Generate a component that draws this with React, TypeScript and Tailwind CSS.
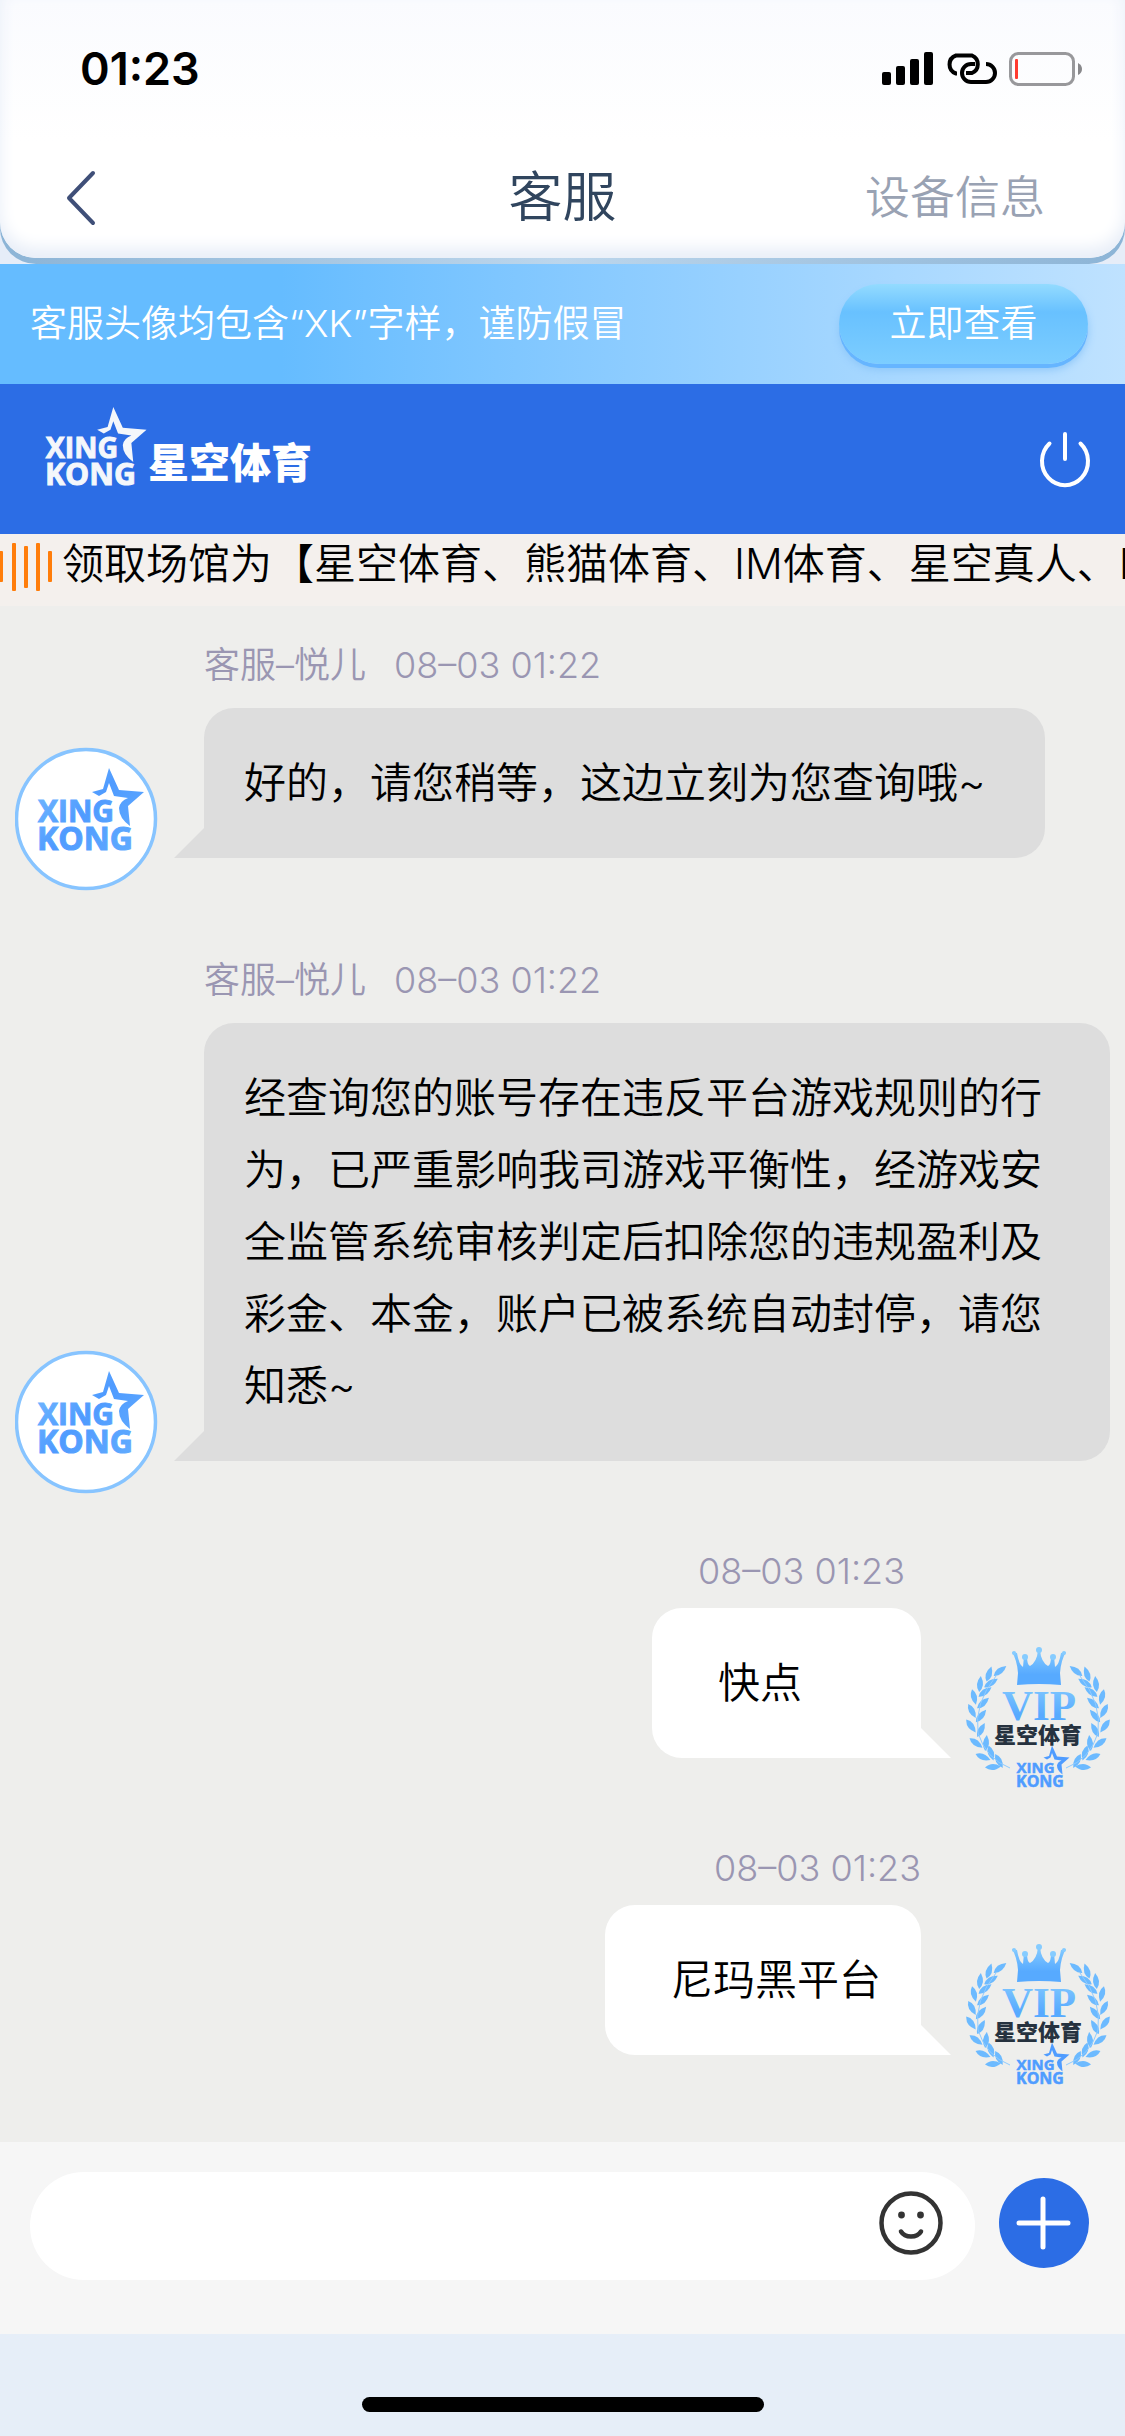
import { useId, useState } from 'react'

type Message = {
  id: string
  from: 'agent' | 'user'
  name?: string
  time: string
  text: string
  short?: boolean
}

const messages: Message[] = [
  {
    id: 'm1',
    from: 'agent',
    name: '客服–悦儿',
    time: '08–03 01:22',
    text: '好的，请您稍等，这边立刻为您查询哦~',
  },
  {
    id: 'm2',
    from: 'agent',
    name: '客服–悦儿',
    time: '08–03 01:22',
    text: '经查询您的账号存在违反平台游戏规则的行为，已严重影响我司游戏平衡性，经游戏安全监管系统审核判定后扣除您的违规盈利及彩金、本金，账户已被系统自动封停，请您知悉~',
  },
  { id: 'm3', from: 'user', time: '08–03 01:23', text: '快点', short: true },
  { id: 'm4', from: 'user', time: '08–03 01:23', text: '尼玛黑平台' },
]

// x, y, rotation of each leaf on the left branch
const leaves = [
  [34, 24, -38],
  [23, 27, -72],
  [25, 36, -32],
  [14, 37, -84],
  [19, 45, -36],
  [8, 50, 76],
  [17, 56, -42],
  [6, 64, 62],
  [15, 69, -50],
  [5, 79, 54],
  [15, 83, -62],
  [10, 96, 36],
  [20, 96, -84],
  [17, 110, 22],
  [25, 106, 72],
  [27, 120, -4],
  [33, 114, 62],
]

function LogoMark({ fill }: { fill: string }) {
  return (
    <g fill={fill} fontFamily='"Open Sans", "Noto Sans", sans-serif' fontWeight="700">
      <path d="M77 45 L88 42 L94 21 L104 43 L129 45 L113 59 L115 79 Q104 71 104 61 Q105 54 113 51 L99 49 L94 36 L91 45 L84 49 Z" />
      <text x="23" y="75" fontSize="30" stroke={fill} strokeWidth="1">
        XING
      </text>
      <text x="22" y="103" fontSize="32" stroke={fill} strokeWidth="1">
        KONG
      </text>
    </g>
  )
}

function AgentAvatar() {
  const id = useId()
  return (
    <svg viewBox="0 0 144 144" className="size-36 shrink-0" role="img" aria-label="XK">
      <defs>
        <linearGradient id={id} gradientUnits="userSpaceOnUse" x1="20" y1="20" x2="120" y2="110">
          <stop offset="0" stopColor="#7cc0ff" />
          <stop offset="0.5" stopColor="#4f9bff" />
          <stop offset="1" stopColor="#62acff" />
        </linearGradient>
      </defs>
      <circle cx="71" cy="72" r="69.500" fill="#fff" stroke="#87c4ff" strokeWidth="3.500" />
      <LogoMark fill={`url(#${id})`} />
    </svg>
  )
}

function Branch({ fill }: { fill: string }) {
  return (
    <g fill={fill}>
      {leaves.map(([x, y, angle]) => (
        <path
          key={`${x}-${y}`}
          d="M-8 0 Q-1 -6 8 0 Q-1 6 -8 0 Z"
          transform={`translate(${x} ${y}) rotate(${angle})`}
        />
      ))}
      <path
        d="M44 121 Q20 112 12 86 Q8 56 30 29"
        fill="none"
        stroke="#8fcbff"
        strokeWidth="1"
      />
    </g>
  )
}

function UserAvatar() {
  const id = useId()
  const fill = `url(#${id})`
  return (
    <svg viewBox="0 0 144 144" className="size-36 shrink-0" role="img" aria-label="VIP">
      <defs>
        <linearGradient id={id} x1="0" y1="0" x2="0" y2="1">
          <stop offset="0" stopColor="#86ccff" />
          <stop offset="0.7" stopColor="#57aaff" />
        </linearGradient>
      </defs>
      <Branch fill="#6cbaff" />
      <g transform="translate(144 0) scale(-1 1)">
        <Branch fill="#6cbaff" />
      </g>
      <path
        d="M51 38 L52 26 Q51 13 46 5 L51 6 Q53 18 57 20 L58 9 L61 9 Q61 18 64 19 Q71 15 72 3 L74 3 Q75 15 82 19 Q85 18 85 9 L88 9 L89 20 Q93 18 95 6 L100 5 Q95 13 94 26 L95 38 Q73 36 51 38 Z"
        fill={fill}
      />
      <g fill="#86ccff">
        <circle cx="48" cy="6" r="2" />
        <circle cx="59" cy="10" r="3" />
        <circle cx="73" cy="3" r="3" />
        <circle cx="87" cy="10" r="3" />
        <circle cx="98" cy="6" r="2" />
      </g>
      <text
        x="73"
        y="73"
        textAnchor="middle"
        fontFamily='"Liberation Serif", serif'
        fontWeight="700"
        fontSize="43"
        fill={fill}
      >
        VIP
      </text>
      <text
        x="72"
        y="96"
        textAnchor="middle"
        fontFamily='"Noto Sans CJK SC", sans-serif'
        fontWeight="900"
        fontSize="22"
        fill="#26323f"
      >
        星空体育
      </text>
      <g transform="translate(39 88) scale(0.5)">
        <LogoMark fill="#4f9cff" />
      </g>
    </svg>
  )
}

function StatusIcons() {
  return (
    <svg viewBox="0 0 202 36" className="h-9 w-[202px]" aria-hidden="true">
      <g>
        <rect x="1" y="21" width="9" height="13" rx="2" />
        <rect x="15" y="15" width="9" height="19" rx="2" />
        <rect x="29" y="8" width="9" height="26" rx="2" />
        <rect x="43" y="1" width="9" height="33" rx="2" />
      </g>
      <g fill="none" stroke="#000" strokeWidth="4" strokeLinecap="butt">
        <path d="M76 22.500 H75 A9.500 9.500 0 0 1 75 4.500 H91 A9.500 9.500 0 0 1 91 22 H85" />
        <path d="M94 13 H90 A9 9 0 0 0 90 31 H105 A9 9 0 0 0 105 13" />
      </g>
      <rect x="129.500" y="2.500" width="63" height="31" rx="8" fill="none" stroke="#98989b" strokeWidth="3" />
      <rect x="134" y="8" width="3" height="20" rx="1" fill="#ff3b30" />
      <path d="M197 12 Q201 14 201 18 Q201 22 197 24 Z" fill="#88888b" />
    </svg>
  )
}

function Header() {
  return (
    <header className="bg-[#e6edf8]">
      <div className="rounded-b-[36px] bg-linear-to-r from-[#8cb4d6] via-[#bcd6ec] to-[#8cb4d6] pb-1.5">
        <div className="rounded-b-[36px] bg-linear-to-b from-[#fafbfe] to-white to-55% shadow-[inset_0_-10px_16px_#e8eef8]">
          <div className="flex h-[138px] items-center justify-between pr-[42px] pl-20">
            <time className="font-[Inter,sans-serif] text-[45px] font-semibold text-black">
              01:23
            </time>
            <StatusIcons />
          </div>
          <div className="grid h-[120px] grid-cols-3 items-center px-16">
            <button type="button" aria-label="返回" className="justify-self-start">
              <svg viewBox="0 0 34 56" className="h-14 w-[34px]" aria-hidden="true">
                <path
                  d="M29 3 L5 28 L29 53"
                  fill="none"
                  stroke="#3f4f78"
                  strokeWidth="4"
                  strokeLinecap="round"
                  strokeLinejoin="round"
                />
              </svg>
            </button>
            <h1 className="text-center text-[54px] leading-[60px] text-[#30455e]">客服</h1>
            <button
              type="button"
              className="justify-self-end pr-4 text-[45px] leading-[60px] text-[#99a2b3]"
            >
              设备信息
            </button>
          </div>
        </div>
      </div>
    </header>
  )
}

function NoticeBanner() {
  return (
    <div className="flex h-[120px] items-center justify-between bg-linear-to-r from-[#65bcff] from-25% to-[#bfe2ff] pr-[37px] pl-[30px] text-[37px] leading-[48px] text-white">
      <p>客服头像均包含“XK”字样，谨防假冒</p>
      <button
        type="button"
        className="h-20 w-[249px] rounded-full bg-linear-to-b from-[#93dbff] via-[#68c1ff] via-35% to-[#7ccdff] shadow-[0_4px_0_#66b5ff,0_6px_8px_#8cc6f8]"
      >
        立即查看
      </button>
    </div>
  )
}

function BrandBar() {
  return (
    <div className="flex h-[150px] items-center justify-between bg-[#2c6de5] pr-8 pl-10">
      <svg viewBox="0 -15 280 120" className="h-[120px] w-[280px]" role="img" aria-label="星空体育">
        <g transform="translate(-16 -27) scale(0.95)">
          <LogoMark fill="#f4f7fb" />
        </g>
        <text
          x="108"
          y="64"
          fontFamily='"Noto Sans CJK SC", sans-serif'
          fontWeight="900"
          fontSize="41"
          fill="#fff"
        >
          星空体育
        </text>
      </svg>
      <button type="button" aria-label="结束会话">
        <svg viewBox="0 0 56 60" className="h-[60px] w-14" aria-hidden="true">
          <g fill="none" stroke="#fff" strokeWidth="4" strokeLinecap="round">
            <path d="M12.500 14.500 A23 24 0 1 0 43.500 14.500" />
            <path d="M28 5 V30" />
          </g>
        </svg>
      </button>
    </div>
  )
}

function Marquee() {
  return (
    <div className="flex h-[72px] items-start gap-2.5 overflow-hidden bg-[#f4f0ed] pt-1.5">
      <svg viewBox="0 0 52 54" className="h-[54px] w-[52px] shrink-0" aria-hidden="true">
        <g fill="#ff7d0a">
          <rect x="-1" y="11" width="4" height="31" rx="1" />
          <rect x="12" y="3" width="4" height="48" rx="1" />
          <rect x="24" y="6" width="4" height="42" rx="1" />
          <rect x="36" y="3" width="4" height="48" rx="1" />
          <rect x="48" y="11" width="4" height="31" rx="1" />
        </g>
      </svg>
      <p className="text-[42px] leading-[48px] whitespace-nowrap text-black">
        领取场馆为【星空体育、熊猫体育、IM体育、星空真人、IM真人】
      </p>
    </div>
  )
}

function AgentMessage({ message }: { message: Message }) {
  return (
    <li className="flex items-end gap-[45px] px-[15px] pt-8 pb-[30px]">
      <AgentAvatar />
      <div className="flex min-w-0 flex-col items-start pb-[33px]">
        <p className="mb-4 flex gap-7 text-4xl leading-[54px] text-[#9a96b2]">
          <span>{message.name}</span>
          <time>{message.time}</time>
        </p>
        <div className="relative rounded-[30px] rounded-bl-none bg-[#ddd] py-[39px] pr-[60px] pl-10">
          <p className="text-[42px] leading-[72px] text-black">{message.text}</p>
          <svg viewBox="0 0 30 30" className="absolute right-full bottom-0 size-[30px]" aria-hidden="true">
            <path d="M30 0 V30 H0 Z" fill="#ddd" />
          </svg>
        </div>
      </div>
    </li>
  )
}

function UserMessage({ message }: { message: Message }) {
  return (
    <li className="flex items-end justify-end gap-[45px] px-[15px] pt-5 pb-[30px]">
      <div className="flex min-w-0 flex-col items-end pb-[33px]">
        <p
          className={`mb-2.5 text-4xl leading-[54px] text-[#9a96b2] ${message.short ? 'pr-4' : ''}`}
        >
          <time>{message.time}</time>
        </p>
        <div className="relative min-w-[269px] rounded-[30px] rounded-br-none bg-white py-[39px] pr-10 pl-[66px]">
          <p className="text-[42px] leading-[72px] text-black">{message.text}</p>
          <svg viewBox="0 0 30 30" className="absolute bottom-0 left-full size-[30px]" aria-hidden="true">
            <path d="M0 0 V30 H30 Z" fill="#fff" />
          </svg>
        </div>
      </div>
      <UserAvatar />
    </li>
  )
}

function Composer() {
  const [draft, setDraft] = useState('')

  return (
    <form
      className="flex h-48 items-start gap-6 bg-[#f6f6f6] pt-[30px] pr-9 pl-[30px]"
      onSubmit={(event) => event.preventDefault()}
    >
      <div className="flex h-[108px] flex-1 items-center rounded-full bg-white pr-7 pl-12">
        <input
          type="text"
          aria-label="消息"
          value={draft}
          onChange={(event) => setDraft(event.target.value)}
          className="h-full min-w-0 flex-1 bg-transparent text-[42px] text-black outline-none"
        />
        <button type="button" aria-label="表情" className="-mt-1.5">
          <svg viewBox="0 0 72 72" className="size-[72px]" aria-hidden="true">
            <circle cx="36" cy="36" r="29.500" fill="none" stroke="#333" strokeWidth="4.500" />
            <circle cx="26.500" cy="28" r="3.400" fill="#333" />
            <circle cx="45.500" cy="28" r="3.400" fill="#333" />
            <path
              d="M26 44.500 Q29 49.500 36 49.500 Q43 49.500 46 44.500"
              fill="none"
              stroke="#333"
              strokeWidth="4.500"
              strokeLinecap="round"
            />
          </svg>
        </button>
      </div>
      <button
        type="button"
        aria-label="更多"
        className="mt-1.5 flex size-[90px] items-center justify-center rounded-full bg-[#2c6de5]"
      >
        <svg viewBox="0 0 90 90" className="size-full" aria-hidden="true">
          <path d="M20 45 H69 M44 21 V69" stroke="#fff" strokeWidth="5" strokeLinecap="round" />
        </svg>
      </button>
    </form>
  )
}

export default function App() {
  return (
    <div className="flex min-h-screen flex-col bg-[#eeeeec] font-[Inter,'Noto_Sans_CJK_SC',sans-serif] font-[350]">
      <Header />
      <NoticeBanner />
      <BrandBar />
      <Marquee />
      <main className="flex-1">
        <ul>
          {messages.map((message) =>
            message.from === 'agent' ? (
              <AgentMessage key={message.id} message={message} />
            ) : (
              <UserMessage key={message.id} message={message} />
            ),
          )}
        </ul>
      </main>
      <Composer />
      <footer className="flex h-[102px] items-end justify-center bg-[#e6eef8] pb-6">
        <div className="h-[15px] w-[402px] rounded-full bg-black" />
      </footer>
    </div>
  )
}
